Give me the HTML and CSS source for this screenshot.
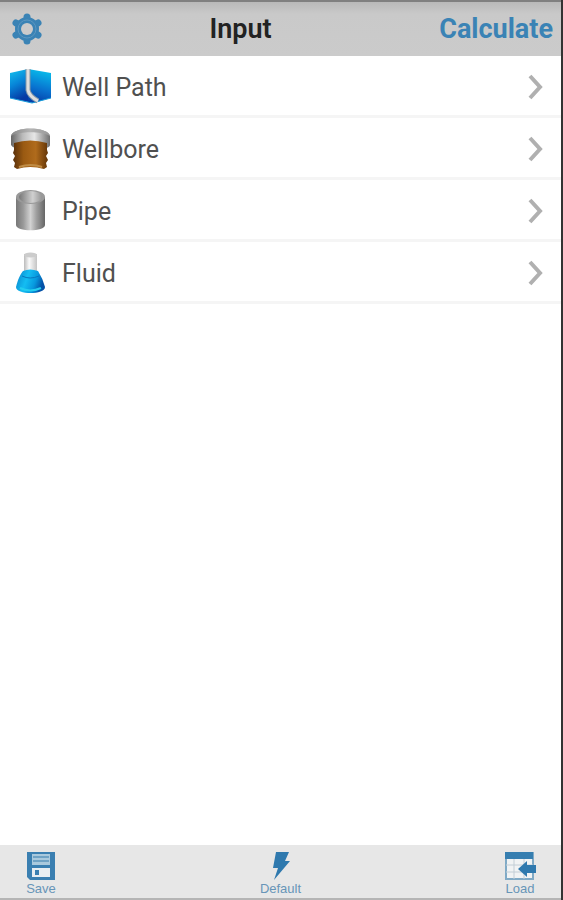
FILE: index.html
```html
<!DOCTYPE html>
<html lang="en">
<head>
    <meta charset="UTF-8">
    <title>Input</title>
    <meta name="viewport" content="width=device-width, initial-scale=1.0">
    <link rel="stylesheet" href="styles.css">
</head>
<body>
    <header class="topbar">
        <button class="settings" type="button" aria-label="Settings">
            <svg width="30" height="32" viewBox="0 0 30 32">
                <circle cx="15" cy="16" r="12" fill="#3a83b5"/>
                <path d="M15 4v24M4 10l22 12M4 22l22-12" stroke="#3a83b5" stroke-width="7" stroke-linecap="round"/>
                <circle cx="15" cy="16" r="9" fill="none" stroke="#5b97c1" stroke-width="1"/>
                <circle cx="15" cy="16" r="6" fill="#cbcbcb"/>
            </svg>
        </button>
        <h1>Input</h1>
        <button class="calculate" type="button">Calculate</button>
    </header>

    <main>
        <ul class="menu">
            <li>
                <a href="#well-path">
                    <svg class="icon" width="42" height="44" viewBox="0 0 42 44" aria-hidden="true">
                        <defs>
                            <linearGradient id="cube-left" x1="0" y1="0" x2="0.3" y2="1">
                                <stop offset="0" stop-color="#14c4ee"/>
                                <stop offset="0.5" stop-color="#0785d8"/>
                                <stop offset="1" stop-color="#0639a4"/>
                            </linearGradient>
                            <linearGradient id="cube-right" x1="0.2" y1="0" x2="0" y2="1">
                                <stop offset="0" stop-color="#08b4e8"/>
                                <stop offset="0.5" stop-color="#0872cf"/>
                                <stop offset="1" stop-color="#0336a2"/>
                            </linearGradient>
                        </defs>
                        <path d="M0 8l18-4v33L0 33z" fill="url(#cube-left)"/>
                        <path d="M18 4l23 4v25l-18 5-5-1z" fill="url(#cube-right)"/>
                        <path d="M0 33l22 5 19-5" fill="none" stroke="#199edb" stroke-width="1"/>
                        <path d="M18 4v21q1 6 10 11" fill="none" stroke="#8096a8" stroke-width="5"/>
                        <path d="M18 4v21q1 6 10 11" fill="none" stroke="#dedede" stroke-width="3"/>
                    </svg>
                    <span>Well Path</span>
                    <svg class="chevron" width="16" height="26" viewBox="0 0 16 26" aria-hidden="true"><path d="M3 2l10 11L3 24"/></svg>
                </a>
            </li>
            <li>
                <a href="#wellbore">
                    <svg class="icon" width="42" height="44" viewBox="0 0 42 44" aria-hidden="true">
                        <defs>
                            <linearGradient id="bore-rim">
                                <stop offset="0" stop-color="#666"/>
                                <stop offset="0.3" stop-color="#bbb"/>
                                <stop offset="0.6" stop-color="#e6e6e6"/>
                                <stop offset="1" stop-color="#707070"/>
                            </linearGradient>
                            <linearGradient id="bore-top">
                                <stop offset="0" stop-color="#888"/>
                                <stop offset="0.5" stop-color="#b4b4b4"/>
                                <stop offset="1" stop-color="#999"/>
                            </linearGradient>
                            <linearGradient id="bore-earth">
                                <stop offset="0" stop-color="#59300a"/>
                                <stop offset="0.3" stop-color="#9a5a12"/>
                                <stop offset="0.65" stop-color="#b06b1c"/>
                                <stop offset="1" stop-color="#633507"/>
                            </linearGradient>
                        </defs>
                        <path d="M1 9c2-10 37-10 39 0v9q0 2-4 3H5q-3-1-4-3z" fill="url(#bore-rim)"/>
                        <path d="M1 9c2-10 37-10 39 0-9-5-30-5-39 0z" fill="url(#bore-top)"/>
                        <path d="M4 16q16-5 33 0v7l1 3-2 3 2 4-2 3 1 4-3 2q-14-4-27 0l-3-2 1-4-2-3 2-4-2-3 1-3z" fill="url(#bore-earth)"/>
                        <path d="M9 40q12-4 23 0" fill="none" stroke="#c08c45" stroke-width="2"/>
                    </svg>
                    <span>Wellbore</span>
                    <svg class="chevron" width="16" height="26" viewBox="0 0 16 26" aria-hidden="true"><path d="M3 2l10 11L3 24"/></svg>
                </a>
            </li>
            <li>
                <a href="#pipe">
                    <svg class="icon" width="42" height="44" viewBox="0 0 42 44" aria-hidden="true">
                        <defs>
                            <linearGradient id="pipe-body">
                                <stop offset="0" stop-color="#777"/>
                                <stop offset="0.25" stop-color="#999"/>
                                <stop offset="0.5" stop-color="#d2d2d2"/>
                                <stop offset="0.7" stop-color="#a0a0a0"/>
                                <stop offset="1" stop-color="#666"/>
                            </linearGradient>
                            <linearGradient id="pipe-hole">
                                <stop offset="0" stop-color="#777"/>
                                <stop offset="0.6" stop-color="#d0d0d0"/>
                                <stop offset="1" stop-color="#959595"/>
                            </linearGradient>
                        </defs>
                        <path d="M6 8v28c0 7 29 7 29 0V8z" fill="url(#pipe-body)"/>
                        <ellipse cx="20.500" cy="8" rx="14.500" ry="7" fill="#999"/>
                        <ellipse cx="20.500" cy="8" rx="11.500" ry="6" fill="url(#pipe-hole)"/>
                    </svg>
                    <span>Pipe</span>
                    <svg class="chevron" width="16" height="26" viewBox="0 0 16 26" aria-hidden="true"><path d="M3 2l10 11L3 24"/></svg>
                </a>
            </li>
            <li>
                <a href="#fluid">
                    <svg class="icon" width="42" height="44" viewBox="0 0 42 44" aria-hidden="true">
                        <defs>
                            <linearGradient id="flask-neck">
                                <stop offset="0" stop-color="#bbb"/>
                                <stop offset="0.4" stop-color="#fafafa"/>
                                <stop offset="1" stop-color="#c4c4c4"/>
                            </linearGradient>
                            <linearGradient id="flask-fluid" x1="0" y1="0" x2="1" y2="0.3">
                                <stop offset="0" stop-color="#087fc9"/>
                                <stop offset="0.45" stop-color="#14bdf2"/>
                                <stop offset="0.75" stop-color="#0798de"/>
                                <stop offset="1" stop-color="#0452a8"/>
                            </linearGradient>
                        </defs>
                        <path d="M14 3v18h13V3z" fill="url(#flask-neck)"/>
                        <ellipse cx="20.500" cy="4" rx="6.500" ry="2.500" fill="#ccc"/>
                        <path d="M13 20q7-3 15 0 5 8 7 16c0 8-29 8-29 0 2-8 4-12 7-16z" fill="url(#flask-fluid)"/>
                        <path d="M12 25q8 4 17 0" fill="none" stroke="#0876bd" stroke-width="1"/>
                        <path d="M10 37q10 5 21 0" fill="none" stroke="#24cdef" stroke-width="2"/>
                    </svg>
                    <span>Fluid</span>
                    <svg class="chevron" width="16" height="26" viewBox="0 0 16 26" aria-hidden="true"><path d="M3 2l10 11L3 24"/></svg>
                </a>
            </li>
        </ul>
    </main>

    <footer class="toolbar">
        <button type="button">
            <svg width="32" height="30" viewBox="0 0 32 30" aria-hidden="true">
                <path d="M2 1h28v28H5l-3-3z" fill="#3a7fb1"/>
                <path d="M7 3h18v11H7z" fill="#a9c9dd"/>
                <path d="M8 6h16M8 10h16" stroke="#6fa2c4" stroke-width="2"/>
                <path d="M7 17h18v9H7z" fill="#e8eef2"/>
                <path d="M10 19h4v5h-4z" fill="#3a7fb1"/>
            </svg>
            Save
        </button>
        <button type="button">
            <svg width="32" height="30" viewBox="0 0 32 30" aria-hidden="true">
                <path d="M11 1h13l-4 9h5L9 29l4-12H8z" fill="#2f79ae"/>
            </svg>
            Default
        </button>
        <button type="button">
            <svg width="32" height="30" viewBox="0 0 32 30" aria-hidden="true">
                <path d="M2 2h27v26H2z" fill="#f1f3f4" stroke="#80aac6" stroke-width="2"/>
                <path d="M10 8v20M20 8v20M2 14h27M2 21h27" stroke="#c3ced6" stroke-width="1"/>
                <path d="M1 1h28v7H1z" fill="#367eb0"/>
                <path d="M14 18l9-8v4h9v8h-9v4z" fill="#2f79ae"/>
            </svg>
            Load
        </button>
    </footer>
</body>
</html>
```

FILE: styles.css
```css
* {
    box-sizing: border-box;
}
body {
    display: flex;
    flex-direction: column;
    min-height: 100vh;
    margin: 0;
    border-right: 2px solid #333;
    background: #fff;
    color: #444;
    font-family: Roboto, sans-serif;
}
button {
    padding: 0;
    border: 0;
    background: none;
    color: #3a83b5;
    font-family: inherit;
    cursor: pointer;
}
.topbar {
    display: flex;
    align-items: center;
    justify-content: space-between;
    height: 56px;
    padding: 0 8px 0 12px;
    border-top: 2px solid #808080;
    background: linear-gradient(#b9b9b9, #c9c9c9 12px, #cbcbcb);
}
.topbar h1 {
    margin: 0;
    color: #222;
    font-size: 27px;
    font-weight: 600;
}
.settings svg {
    display: block;
}
.calculate {
    font-size: 27px;
    font-weight: 700;
}
.menu {
    margin: 0;
    padding: 0;
    list-style: none;
}
.menu li {
    border-bottom: 3px solid #f5f5f5;
}
.menu a {
    display: flex;
    align-items: center;
    gap: 10px;
    height: 59px;
    padding: 3px 18px 0 10px;
    color: #505050;
    font-size: 25px;
    text-decoration: none;
}
.menu span {
    flex: 1;
}
.chevron {
    fill: none;
    stroke: #b0b0b0;
    stroke-width: 4;
}
.toolbar {
    display: flex;
    justify-content: space-between;
    margin-top: auto;
    padding: 6px 20px 2px;
    border-bottom: 2px solid #b5b5b5;
    background: #e7e7e7;
}
.toolbar button {
    display: flex;
    flex-direction: column;
    align-items: center;
    min-width: 42px;
    color: #6795b8;
    font-family: "Liberation Sans", sans-serif;
    font-size: 13px;
    line-height: 15px;
}
```
